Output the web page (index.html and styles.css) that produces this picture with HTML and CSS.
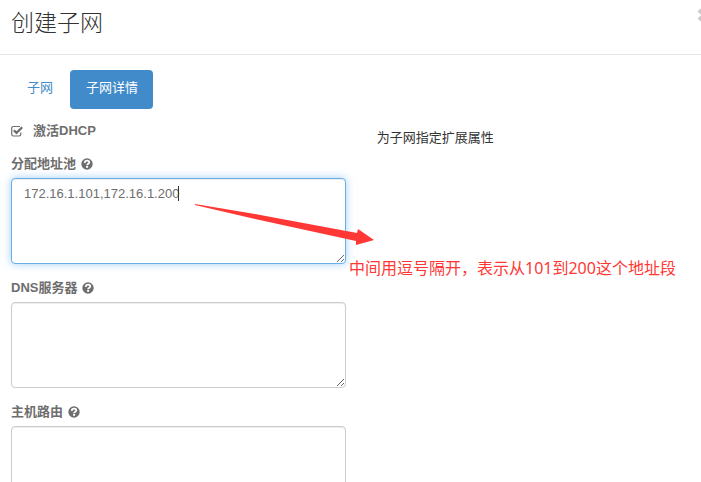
FILE: index.html
```html
<!DOCTYPE html>
<html lang="zh-CN">
<head>
    <meta charset="UTF-8">
    <meta name="viewport" content="width=device-width, initial-scale=1.0">
    <title>创建子网</title>
    <link rel="stylesheet" href="styles.css">
</head>
<body>
<svg class="symbols" aria-hidden="true">
    <symbol id="question" viewBox="0 0 12 12">
        <circle cx="6" cy="6" r="5.7" fill="currentColor"/>
        <path d="M3.7 4.800C3.900 3.300 4.800 2.700 6 2.700c1.400 0 2.300.8 2.300 1.900C8.300 5.900 6.100 5.700 6.100 7.300" fill="none" stroke="#fff" stroke-width="1.800"/>
        <rect x="5.100" y="8" width="2" height="1.800" fill="#fff"/>
    </symbol>
</svg>

<div class="modal-header">
    <h3>创建子网</h3>
    <button type="button" class="close" aria-label="关闭">
        <svg viewBox="0 0 14 14"><path d="M2 2L12 12M12 2L2 12" stroke="currentColor" stroke-width="4"/></svg>
    </button>
</div>

<div class="modal-body">
    <nav class="tabs">
        <a href="#subnet">子网</a>
        <a href="#detail" class="active">子网详情</a>
    </nav>

    <form class="row" id="detail">
        <div class="fields">
            <div class="checkbox">
                <input type="checkbox" id="dhcp" checked>
                <svg class="tick" viewBox="0 0 12 12" aria-hidden="true">
                    <path d="M9 1.500H2.500Q.7 1.500 .7 3.200v6Q.7 11 2.500 11H8Q9.800 11 9.800 9.300V7.500" fill="none" stroke="currentColor" stroke-width="1.200"/>
                    <path d="M2.800 5.200L5.500 7.900L11.200 2.200" fill="none" stroke="currentColor" stroke-width="2.200"/>
                </svg>
                <label for="dhcp">激活DHCP</label>
            </div>

            <div class="form-group">
                <label for="pools">分配地址池 <svg class="help"><use href="#question"/></svg></label>
                <div class="control">
                    <textarea id="pools" class="focused">172.16.1.101,172.16.1.200</textarea>
                    <span class="caret"></span>
                </div>
            </div>

            <div class="form-group">
                <label for="dns">DNS服务器 <svg class="help"><use href="#question"/></svg></label>
                <textarea id="dns"></textarea>
            </div>

            <div class="form-group">
                <label for="routes">主机路由 <svg class="help"><use href="#question"/></svg></label>
                <textarea id="routes"></textarea>
            </div>
        </div>
        <p class="description">为子网指定扩展属性</p>
    </form>
</div>

<!-- notes drawn over the form -->
<svg class="arrow" viewBox="0 0 180 44" aria-hidden="true">
    <path d="M0 1L60 11L162 30L163 26L179 37L161 42L161 38L60 16L0 2Z" fill="#ff3835"/>
</svg>
<p class="note">中间用逗号隔开，表示从101到200这个地址段</p>
</body>
</html>
```
FILE: styles.css
```css
* {
    box-sizing: border-box;
}

body {
    margin: 0;
    position: relative;
    overflow: hidden;
    background: #fff;
    color: #6e6e6e;
    font-family: "Liberation Sans", "Noto Sans CJK SC", sans-serif;
    font-size: 13px;
    line-height: 18px;
}

.symbols {
    display: none;
}

.modal-header {
    position: relative;
    height: 55px;
    padding: 8px 11px;
    border-bottom: 1px solid #e5e5e5;
}

.modal-header h3 {
    margin: 0;
    font-size: 23px;
    font-weight: 300;
    line-height: 30px;
    color: #333;
}

.close {
    position: absolute;
    top: 8px;
    right: -10px;
    width: 14px;
    height: 14px;
    padding: 0;
    border: 0;
    background: none;
    color: #ccc;
}

.close svg {
    display: block;
}

.modal-body {
    padding: 15px 7px 0 11px;
}

.tabs {
    display: flex;
    gap: 2px;
}

.tabs a {
    padding: 9px 15px 12px 16px;
    border-radius: 4px;
    color: #428bca;
    text-decoration: none;
}

.tabs a.active {
    background: #428bca;
    color: #fff;
}

.row {
    display: grid;
    grid-template-columns: 49% 1fr;
    gap: 31px;
}

.checkbox {
    display: flex;
    align-items: center;
    position: relative;
    margin: 13px 0 15px;
    font-weight: bold;
}

.checkbox input {
    position: absolute;
    width: 12px;
    height: 12px;
    margin: 0;
    opacity: 0;
}

.tick {
    width: 12px;
    height: 12px;
    margin-right: 10px;
}

.form-group {
    margin-bottom: 15px;
}

.form-group label {
    display: flex;
    align-items: center;
    gap: 5px;
    margin-bottom: 5px;
    font-weight: bold;
}

.help {
    width: 12px;
    height: 12px;
}

.control {
    position: relative;
}

textarea {
    display: block;
    width: 100%;
    height: 86px;
    padding: 6px 12px;
    border: 1px solid #ccc;
    border-radius: 4px;
    outline: 0;
    box-shadow: inset 0 1px 1px rgba(0, 0, 0, 0.075);
    color: #6e6e6e;
    font: inherit;
    resize: vertical;
}

textarea.focused {
    border-color: #66afe9;
    box-shadow: inset 0 1px 1px rgba(0, 0, 0, 0.075), 0 0 8px rgba(102, 175, 233, 0.6);
}

.caret {
    position: absolute;
    top: 8px;
    left: 167px;
    width: 1px;
    height: 15px;
    background: #333;
}

.description {
    margin: 20px 0 0;
    color: #333;
}

.arrow {
    position: absolute;
    top: 203px;
    left: 195px;
    width: 180px;
    height: 44px;
}

.note {
    position: absolute;
    top: 257px;
    left: 349px;
    margin: 0;
    color: #ff3835;
    font-family: "Noto Sans", "Noto Sans CJK SC", sans-serif;
    font-size: 16px;
    line-height: 22px;
    white-space: nowrap;
}
```
